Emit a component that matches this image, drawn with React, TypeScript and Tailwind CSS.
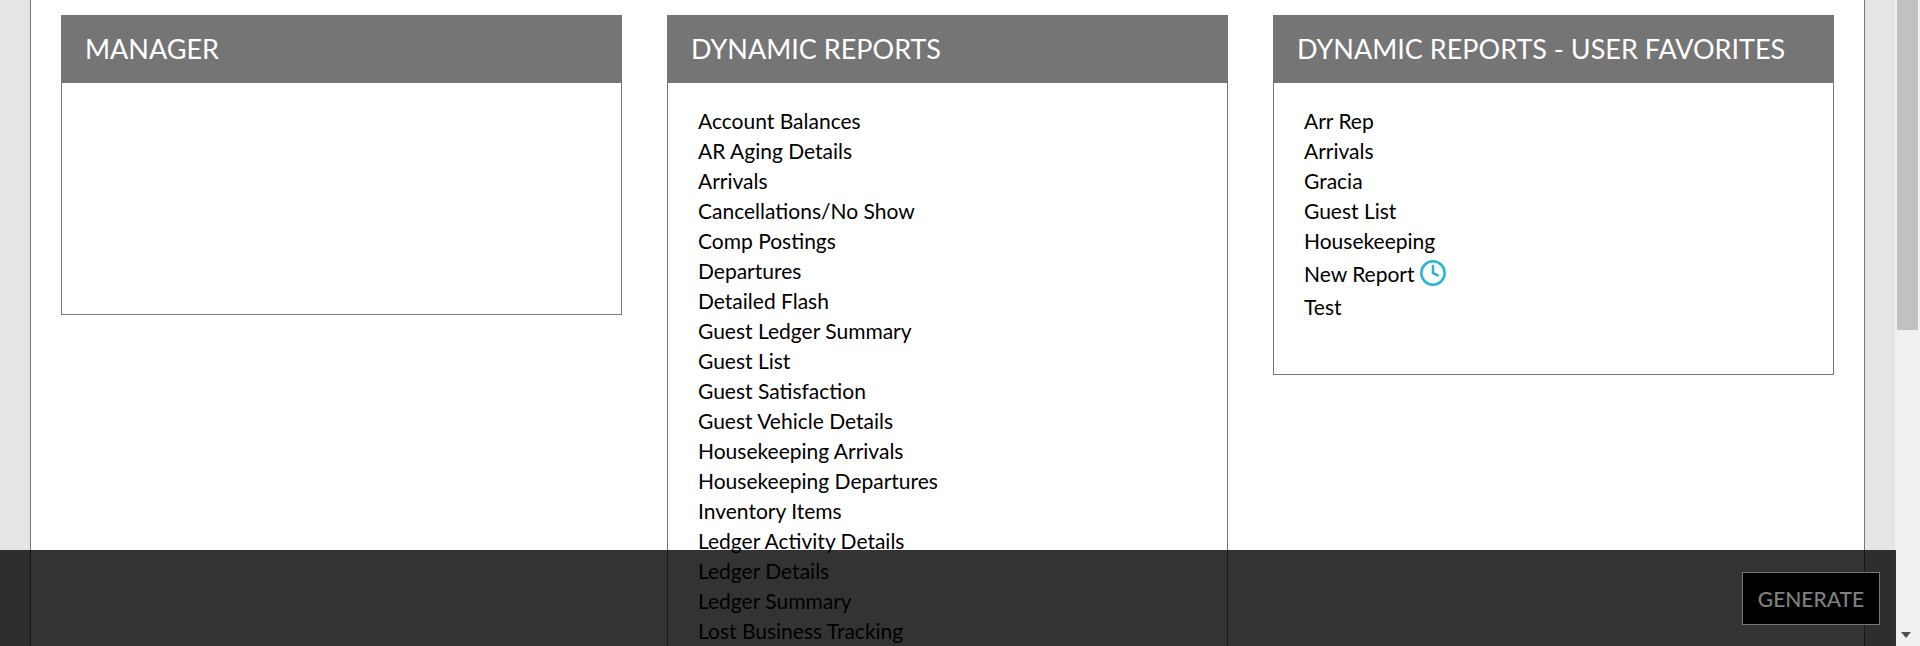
import { Clock } from 'lucide-react';
import type { ReactNode } from 'react';

const REPORTS = [
  'Account Balances',
  'AR Aging Details',
  'Arrivals',
  'Cancellations/No Show',
  'Comp Postings',
  'Departures',
  'Detailed Flash',
  'Guest Ledger Summary',
  'Guest List',
  'Guest Satisfaction',
  'Guest Vehicle Details',
  'Housekeeping Arrivals',
  'Housekeeping Departures',
  'Inventory Items',
  'Ledger Activity Details',
  'Ledger Details',
  'Ledger Summary',
  'Lost Business Tracking',
];

const FAVORITES = ['Arr Rep', 'Arrivals', 'Gracia', 'Guest List', 'Housekeeping'];

function Panel({ title, className, children }: { title: string; className?: string; children?: ReactNode }) {
  return (
    <section className={`flex w-[561px] flex-col border border-[#777777] ${className ?? ''}`}>
      <h2 className="-mx-px -mt-px flex h-[68px] shrink-0 items-center bg-[#757575] pl-6 text-[27px] font-normal text-white">
        {title}
      </h2>
      {children}
    </section>
  );
}

function Row({ children }: { children: ReactNode }) {
  return <li className="h-[30px] leading-[30px]">{children}</li>;
}

export default function App() {
  return (
    <div className="relative flex h-[646px] w-[1920px] overflow-hidden bg-[#f1f1f1] font-['Lato',sans-serif] text-[21px] text-black">
      <div className="w-[30px] shrink-0 bg-[#e5e5e5]" />
      <main className="flex w-[1835px] shrink-0 items-start gap-[45px] border-x border-[#777777] bg-white pl-[30px] pt-[15px]">
        <Panel title="MANAGER" className="h-[300px]" />
        <Panel title="DYNAMIC REPORTS">
          <ul className="pb-10 pl-[30px] pt-[23px]">
            {REPORTS.map((r) => (
              <Row key={r}>{r}</Row>
            ))}
          </ul>
        </Panel>
        <Panel title="DYNAMIC REPORTS - USER FAVORITES" className="h-[360px]">
          <ul className="pl-[30px] pt-[23px]">
            {FAVORITES.map((r) => (
              <Row key={r}>{r}</Row>
            ))}
            <li className="flex h-[33px] items-center gap-[4px] pt-[3px]">
              New Report
              <Clock size={28} strokeWidth={2.2} className="-mt-[3px] text-[#29b6d6]" />
            </li>
            <li className="flex h-[33px] items-center pt-[3px]">Test</li>
          </ul>
        </Panel>
      </main>
      <div className="w-[30px] shrink-0 bg-[#e5e5e5]" />
      {/* scrollbar */}
      <div className="absolute bottom-0 right-0 top-0 w-[24px] bg-[#f1f1f1]">
        <div className="ml-px h-[330px] w-[21px] bg-[#c1c1c1]" />
        <div className="absolute bottom-[8px] left-[5px] h-0 w-0 border-x-[5px] border-t-[6px] border-x-transparent border-t-[#505050]" />
      </div>
      {/* sticky footer */}
      <footer className="absolute bottom-0 left-0 flex h-[96px] w-[1896px] items-start justify-end bg-black/80 pr-[16px] pt-[22px]">
        <button className="h-[53px] w-[138px] border border-[#777777] bg-black text-[21px] font-medium text-[#808080]">GENERATE</button>
      </footer>
    </div>
  );
}
